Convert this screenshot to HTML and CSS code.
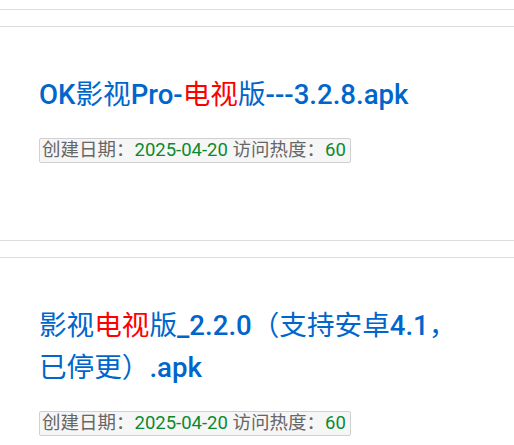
FILE: index.html
```html
<!DOCTYPE html>
<html lang="zh-CN">
<head>
<meta charset="utf-8">
<title>列表</title>
<link rel="stylesheet" href="styles.css">
</head>
<body>
<div class="card card-prev"></div>
<div class="card">
  <h2 class="title">OK<span class="cjk">影视</span>Pro-<span class="cjk hl">电视</span><span class="cjk">版</span>---3.2.8.apk</h2>
  <div class="meta"><span class="label">创建日期：</span><span class="val">2025-04-20</span> <span class="label">访问热度：</span><span class="val">60</span></div>
</div>
<div class="card">
  <h2 class="title"><span class="cjk">影视</span><span class="cjk hl">电视</span><span class="cjk">版</span>_2.2.0<span class="cjk">（支持安卓</span>4.1<span class="cjk">，已停更）</span>.apk</h2>
  <div class="meta"><span class="label">创建日期：</span><span class="val">2025-04-20</span> <span class="label">访问热度：</span><span class="val">60</span></div>
</div>
</body>
</html>
```
FILE: styles.css
```css
html, body {
  margin: 0;
  padding: 0;
  background: #fff;
}
body {
  font-family: Roboto, "Noto Sans CJK SC", sans-serif;
}
.card {
  border-top: 1px solid #dcdcdc;
  border-bottom: 1px solid #dcdcdc;
  margin-bottom: 16px;
  padding: 47px 40px 77px 39px;
}
.card-prev {
  border-top: none;
  padding: 0;
  height: 9px;
}
.title {
  margin: 0 0 22px 0;
  font-size: 27.6px;
  line-height: 42px;
  font-weight: 500;
  color: #0066cc;
}
.cjk {
  font-weight: 400;
}
.hl {
  color: #ff0000;
}
.meta {
  display: inline-block;
  border: 1px solid #d0d0d0;
  border-radius: 2px;
  background: #f6f6f6;
  font-size: 18.5px;
  line-height: 23px;
  padding: 0 4px 0 2px;
  color: #666;
}
.val {
  color: #0a8a2e;
}
```
